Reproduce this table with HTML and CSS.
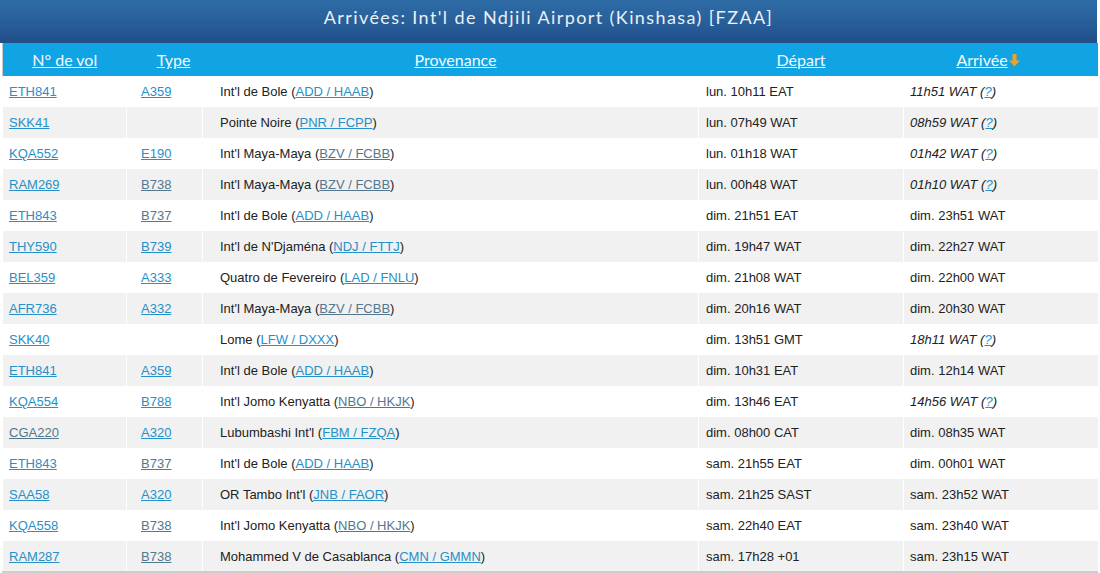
FILE: index.html
```html
<!DOCTYPE html>
<html lang="fr">
<head>
<meta charset="utf-8">
<title>Arrivées FZAA</title>
<link rel="stylesheet" href="styles.css">
</head>
<body>
<div class="board">
  <div class="title">Arrivées: Int'l de Ndjili Airport (Kinshasa) [FZAA]</div>
  <table class="flights">
    <colgroup>
      <col class="c1"><col class="c2"><col class="c3"><col class="c4"><col class="c5">
    </colgroup>
    <thead>
      <tr>
        <th class="h1"><a href="#">N° de vol</a></th>
        <th class="h2"><a href="#">Type</a></th>
        <th class="h3"><a href="#">Provenance</a></th>
        <th class="h4"><a href="#">Départ</a></th>
        <th class="h5"><a href="#">Arrivée</a><svg class="arrow" width="13" height="13" viewBox="0 0 13 13"><path d="M4.5 0h4v6.5h3.5L6.5 12.5 1 6.5h3.5z" fill="#f5a01a"/></svg></th>
      </tr>
    </thead>
    <tbody>
      <tr><td class="d1"><a href="#">ETH841</a></td><td class="d2"><a href="#">A359</a></td><td class="d3">Int'l de Bole (<a href="#">ADD / HAAB</a>)</td><td class="d4">lun. 10h11 EAT</td><td class="d5"><i>11h51 WAT (<a href="#">?</a>)</i></td></tr>
      <tr><td class="d1"><a href="#">SKK41</a></td><td class="d2"></td><td class="d3">Pointe Noire (<a href="#">PNR / FCPP</a>)</td><td class="d4">lun. 07h49 WAT</td><td class="d5"><i>08h59 WAT (<a href="#">?</a>)</i></td></tr>
      <tr><td class="d1"><a href="#">KQA552</a></td><td class="d2"><a href="#">E190</a></td><td class="d3">Int'l Maya-Maya (<a class="v" href="#">BZV / FCBB</a>)</td><td class="d4">lun. 01h18 WAT</td><td class="d5"><i>01h42 WAT (<a href="#">?</a>)</i></td></tr>
      <tr><td class="d1"><a href="#">RAM269</a></td><td class="d2"><a class="v" href="#">B738</a></td><td class="d3">Int'l Maya-Maya (<a class="v" href="#">BZV / FCBB</a>)</td><td class="d4">lun. 00h48 WAT</td><td class="d5"><i>01h10 WAT (<a href="#">?</a>)</i></td></tr>
      <tr><td class="d1"><a href="#">ETH843</a></td><td class="d2"><a class="v" href="#">B737</a></td><td class="d3">Int'l de Bole (<a href="#">ADD / HAAB</a>)</td><td class="d4">dim. 21h51 EAT</td><td class="d5">dim. 23h51 WAT</td></tr>
      <tr><td class="d1"><a href="#">THY590</a></td><td class="d2"><a href="#">B739</a></td><td class="d3">Int'l de N'Djaména (<a href="#">NDJ / FTTJ</a>)</td><td class="d4">dim. 19h47 WAT</td><td class="d5">dim. 22h27 WAT</td></tr>
      <tr><td class="d1"><a href="#">BEL359</a></td><td class="d2"><a href="#">A333</a></td><td class="d3">Quatro de Fevereiro (<a href="#">LAD / FNLU</a>)</td><td class="d4">dim. 21h08 WAT</td><td class="d5">dim. 22h00 WAT</td></tr>
      <tr><td class="d1"><a href="#">AFR736</a></td><td class="d2"><a href="#">A332</a></td><td class="d3">Int'l Maya-Maya (<a class="v" href="#">BZV / FCBB</a>)</td><td class="d4">dim. 20h16 WAT</td><td class="d5">dim. 20h30 WAT</td></tr>
      <tr><td class="d1"><a href="#">SKK40</a></td><td class="d2"></td><td class="d3">Lome (<a href="#">LFW / DXXX</a>)</td><td class="d4">dim. 13h51 GMT</td><td class="d5"><i>18h11 WAT (<a href="#">?</a>)</i></td></tr>
      <tr><td class="d1"><a href="#">ETH841</a></td><td class="d2"><a href="#">A359</a></td><td class="d3">Int'l de Bole (<a href="#">ADD / HAAB</a>)</td><td class="d4">dim. 10h31 EAT</td><td class="d5">dim. 12h14 WAT</td></tr>
      <tr><td class="d1"><a href="#">KQA554</a></td><td class="d2"><a href="#">B788</a></td><td class="d3">Int'l Jomo Kenyatta (<a class="v" href="#">NBO / HKJK</a>)</td><td class="d4">dim. 13h46 EAT</td><td class="d5"><i>14h56 WAT (<a href="#">?</a>)</i></td></tr>
      <tr><td class="d1"><a class="v" href="#">CGA220</a></td><td class="d2"><a href="#">A320</a></td><td class="d3">Lubumbashi Int'l (<a href="#">FBM / FZQA</a>)</td><td class="d4">dim. 08h00 CAT</td><td class="d5">dim. 08h35 WAT</td></tr>
      <tr><td class="d1"><a href="#">ETH843</a></td><td class="d2"><a class="v" href="#">B737</a></td><td class="d3">Int'l de Bole (<a href="#">ADD / HAAB</a>)</td><td class="d4">sam. 21h55 EAT</td><td class="d5">dim. 00h01 WAT</td></tr>
      <tr><td class="d1"><a href="#">SAA58</a></td><td class="d2"><a href="#">A320</a></td><td class="d3">OR Tambo Int'l (<a href="#">JNB / FAOR</a>)</td><td class="d4">sam. 21h25 SAST</td><td class="d5">sam. 23h52 WAT</td></tr>
      <tr><td class="d1"><a href="#">KQA558</a></td><td class="d2"><a class="v" href="#">B738</a></td><td class="d3">Int'l Jomo Kenyatta (<a class="v" href="#">NBO / HKJK</a>)</td><td class="d4">sam. 22h40 EAT</td><td class="d5">sam. 23h40 WAT</td></tr>
      <tr><td class="d1"><a href="#">RAM287</a></td><td class="d2"><a class="v" href="#">B738</a></td><td class="d3">Mohammed V de Casablanca (<a href="#">CMN / GMMN</a>)</td><td class="d4">sam. 17h28 +01</td><td class="d5">sam. 23h15 WAT</td></tr>
    </tbody>
  </table>
</div>
</body>
</html>
```
FILE: styles.css
```css
html, body {
  margin: 0;
  padding: 0;
  background: #ffffff;
}

body {
  font-family: "Liberation Sans", Arial, sans-serif;
  font-size: 13px;
  color: #222222;
}

.board {
  width: 1097px;
}

.title {
  height: 43px;
  line-height: 34px;
  text-align: center;
  font-family: Lato, "Open Sans", sans-serif;
  font-size: 18px;
  color: #e9f0f7;
  background: linear-gradient(to bottom, #2e6ca6 0%, #285e98 55%, #214e89 100%);
  letter-spacing: 1.4px;
}

.flights {
  border-collapse: collapse;
  table-layout: fixed;
  width: 1095px;
  margin-left: 2px;
  border-left: 1px solid #c8c8c8;
  border-bottom: 2px solid #cdcdcd;
}

.c1 { width: 124px; }
.c2 { width: 76px; }
.c3 { width: 496px; }
.c4 { width: 205px; }
.c5 { width: 194px; }

.flights th {
  height: 33px;
  padding: 0;
  background: #10a4e4;
  font-family: Lato, "Open Sans", sans-serif;
  font-weight: normal;
  font-size: 16px;
  text-align: center;
  vertical-align: middle;
  white-space: nowrap;
}

.flights th a {
  color: #f2f9fd;
  text-decoration: underline;
}

.h2 { padding-left: 18px !important; }
.h3 { padding-left: 10px !important; }
.h5 { padding-right: 24px !important; }

.arrow {
  vertical-align: -1px;
  margin-left: 0;
}

.flights td {
  height: 31px;
  padding: 0;
  vertical-align: middle;
  white-space: nowrap;
  border-left: 1px solid #ffffff;
  box-sizing: border-box;
}

.flights tbody tr:nth-child(even) td {
  background: #f1f1f1;
}

.d1 { padding-left: 6px !important; }
.d2 { padding-left: 14px !important; }
.d3 { padding-left: 17px !important; }
.d4 { padding-left: 7px !important; }
.d5 { padding-left: 6px !important; }

.flights td a {
  color: #2690c8;
  text-decoration: underline;
}

.flights td a.v {
  color: #52788f;
}
```
